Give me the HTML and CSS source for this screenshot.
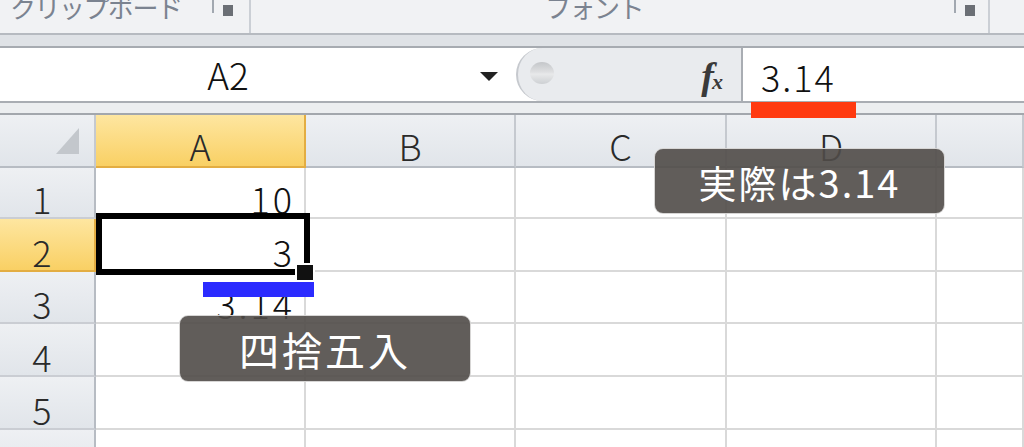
FILE: index.html
```html
<!DOCTYPE html>
<html lang="ja">
<head>
<meta charset="utf-8">
<title>Excel</title>
<link rel="stylesheet" href="styles.css">
</head>
<body>
<div class="ribbon">
  <div class="grp grp-clip"><span class="grp-label">クリップボード</span><span class="launcher"></span></div>
  <div class="grp grp-font"><span class="grp-label label-font">フォント</span><span class="launcher launcher-font"></span></div>
  <div class="grp grp-rest"></div>
</div>
<div class="band"></div>
<div class="fbar">
  <div class="namebox"><span class="name">A2</span><span class="dd"></span></div>
  <div class="fxarea"><span class="knob"></span><span class="fx"><span class="fx-f">f</span><span class="fx-x">x</span></span></div>
  <div class="finput">3.14</div>
</div>
<div class="band2"></div>
<div class="sheet">
  <div class="hc corner"><span class="tri"></span></div>
  <div class="hc col hl">A</div>
  <div class="hc col">B</div>
  <div class="hc col">C</div>
  <div class="hc col">D</div>
  <div class="hc col"></div>

  <div class="hc rowh">1</div>
  <div class="cell">10</div><div class="cell"></div><div class="cell"></div><div class="cell"></div><div class="cell"></div>

  <div class="hc rowh hl">2</div>
  <div class="cell">3</div><div class="cell"></div><div class="cell"></div><div class="cell"></div><div class="cell"></div>

  <div class="hc rowh">3</div>
  <div class="cell">3.14</div><div class="cell"></div><div class="cell"></div><div class="cell"></div><div class="cell"></div>

  <div class="hc rowh">4</div>
  <div class="cell"></div><div class="cell"></div><div class="cell"></div><div class="cell"></div><div class="cell"></div>

  <div class="hc rowh">5</div>
  <div class="cell"></div><div class="cell"></div><div class="cell"></div><div class="cell"></div><div class="cell"></div>

  <div class="hc rowh">6</div>
  <div class="cell"></div><div class="cell"></div><div class="cell"></div><div class="cell"></div><div class="cell"></div>
</div>

<div class="sel"></div>
<div class="handle"></div>
<div class="bar-red"></div>
<div class="bar-blue"></div>
<div class="callout c1">実際は3.14</div>
<div class="callout c2">四捨五入</div>
</body>
</html>
```
FILE: styles.css
```css
* { box-sizing: border-box; }
html, body { margin: 0; padding: 0; }
body {
  width: 1024px;
  height: 447px;
  overflow: hidden;
  position: relative;
  background: #fff;
  font-family: "Noto Sans CJK JP", "Noto Sans", sans-serif;
  color: #222;
}

/* ribbon */
.ribbon {
  display: flex;
  height: 33px;
  background: #f1f2f4;
  overflow: hidden;
}
.grp {
  position: relative;
  height: 33px;
  border-right: 2px solid #cbcfd5;
}
.grp-clip { width: 251px; }
.grp-font { width: 739px; }
.grp-rest { flex: 1; border-right: none; }
.grp-label {
  display: block;
  margin-left: 10px;
  margin-top: -8px;
  font-size: 26px;
  line-height: 30px;
  letter-spacing: -1.5px;
  color: #7b8390;
  white-space: nowrap;
}
.label-font { margin-left: 294px; }
.launcher {
  position: absolute;
  top: 0;
  right: 16px;
  width: 21px;
  height: 16px;
}
.launcher-font { right: 13px; }
.launcher::before {
  content: "";
  position: absolute;
  left: 0;
  top: 0;
  width: 2px;
  height: 13px;
  background: #a2a8b0;
}
.launcher::after {
  content: "";
  position: absolute;
  right: 0;
  top: 5px;
  width: 10px;
  height: 11px;
  background: #6b6f75;
}

.band {
  height: 15px;
  background: #dfe2e6;
  border-top: 2px solid #b6bac0;
  border-bottom: 2px solid #a7abb1;
}

/* formula bar */
.fbar {
  display: flex;
  height: 53px;
  background: #fff;
}
.namebox {
  width: 516px;
  display: flex;
  align-items: center;
}
.name {
  width: 456px;
  text-align: center;
  font-size: 37px;
  font-weight: 300;
  line-height: 53px;
  color: #111;
}
.dd {
  width: 0;
  height: 0;
  margin-left: 24px;
  margin-top: 4px;
  border-left: 9px solid transparent;
  border-right: 9px solid transparent;
  border-top: 9px solid #222;
}
.fxarea {
  position: relative;
  width: 227px;
  background: #e9ebee;
  border-radius: 28px 0 0 28px;
  border-left: 2px solid #c6c9ce;
  border-right: 2px solid #a9adb3;
  display: flex;
  justify-content: flex-end;
  align-items: center;
  padding-right: 18px;
}
.knob {
  position: absolute;
  left: 12px;
  top: 14px;
  width: 24px;
  height: 22px;
  border-radius: 50%;
  background: linear-gradient(#c4c6c9, #dedfe1 45%, #e8e9ea 55%, #cdd0d3);
}
.fx {
  font-family: "Liberation Serif", serif;
  font-style: italic;
  font-weight: bold;
  color: #3a3a3a;
  line-height: 1;
  display: flex;
  align-items: baseline;
  margin-top: 2px;
}
.fx-f { font-size: 38px; }
.fx-x { font-size: 22px; margin-left: -2px; }
.finput {
  flex: 1;
  padding-left: 18px;
  font-size: 36px;
  font-weight: 300;
  letter-spacing: 2px;
  line-height: 56px;
  color: #111;
}

.band2 {
  height: 14px;
  background: #eceef0;
  border-top: 2px solid #a9adb3;
  border-bottom: 2px solid #a3a7ad;
}

/* sheet */
.sheet {
  display: grid;
  grid-template-columns: 96px 210px 210px 211px 210px 1fr;
  grid-template-rows: 53px 51px 53px 52px 53px 53px 53px;
}
.cell {
  border-right: 2px solid #d9d9d9;
  border-bottom: 2px solid #d9d9d9;
  display: flex;
  justify-content: flex-end;
  align-items: flex-end;
  padding-right: 9px;
  padding-bottom: 1px;
  font-size: 36px;
  font-weight: 300;
  line-height: 36px;
  letter-spacing: 3px;
  color: #111;
}
.hc {
  background: linear-gradient(#eef0f3, #e1e5ea);
  border-right: 2px solid #c5c9cf;
  border-bottom: 2px solid #b7bcc3;
  display: flex;
  justify-content: center;
  align-items: flex-end;
  font-size: 36px;
  font-weight: 300;
  line-height: 36px;
  color: #2a2a2a;
  padding-bottom: 3px;
}
.rowh {
  border-right: 2px solid #b7bcc3;
  border-bottom: 2px solid #cacdd3;
  padding-right: 10px;
  padding-bottom: 1px;
}
.corner { position: relative; }
.tri {
  position: absolute;
  right: 15px;
  bottom: 12px;
  width: 0;
  height: 0;
  border-left: 23px solid transparent;
  border-bottom: 26px solid #c3c7cc;
}
.hl {
  background: linear-gradient(#fee6a0, #f9d064);
  border-right-color: #e3ad42;
  border-bottom-color: #e3ad42;
}
.col.hl { border-left: 2px solid #e3ad42; margin-left: -2px; }

/* overlays */
.sel {
  position: absolute;
  left: 96px;
  top: 213px;
  width: 214px;
  height: 62px;
  border: 6px solid #000;
}
.handle {
  position: absolute;
  left: 297px;
  top: 265px;
  width: 16px;
  height: 15px;
  background: #111;
  box-shadow: 0 0 0 2px #fff;
}
.bar-red {
  position: absolute;
  left: 751px;
  top: 102px;
  width: 105px;
  height: 16px;
  background: #ff3a10;
}
.bar-blue {
  position: absolute;
  left: 203px;
  top: 282px;
  width: 111px;
  height: 15px;
  background: #2b2bff;
}
.callout {
  position: absolute;
  display: flex;
  justify-content: center;
  align-items: center;
  background: rgba(80, 75, 72, 0.9);
  border: 1px solid rgba(255, 255, 255, 0.75);
  border-radius: 9px;
  color: #fff;
  white-space: nowrap;
}
.c1 {
  left: 654px;
  top: 148px;
  width: 291px;
  height: 66px;
  font-size: 38px;
  letter-spacing: 2px;
}
.c2 {
  left: 179px;
  top: 315px;
  width: 292px;
  height: 67px;
  font-size: 40px;
  letter-spacing: 3px;
}
```
